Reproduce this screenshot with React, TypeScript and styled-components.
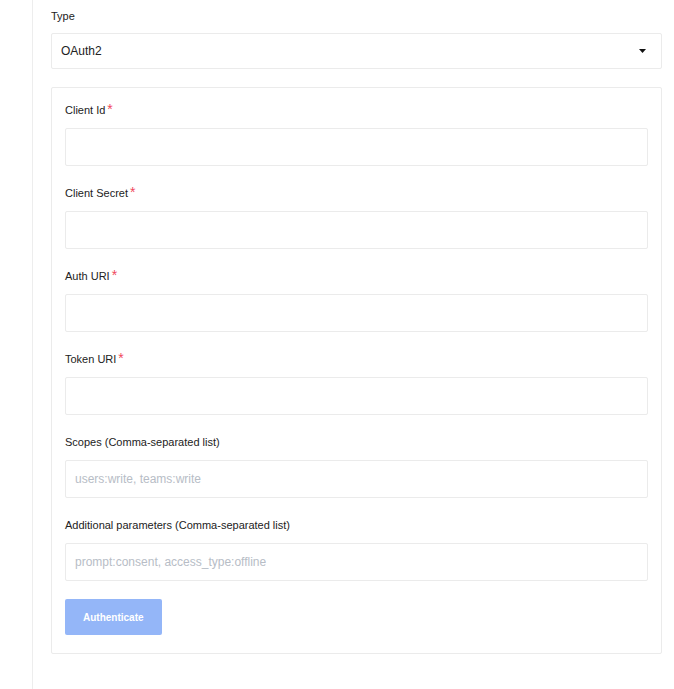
import React from "react";
import styled, { createGlobalStyle } from "styled-components";

const GlobalStyle = createGlobalStyle`
  *, *::before, *::after { box-sizing: border-box; }
  html, body { margin: 0; padding: 0; background: #ffffff; }
  body {
    font-family: "Liberation Sans", Arial, sans-serif;
    color: #222222;
  }
`;

const Page = styled.div`
  display: flex;
  min-height: 689px;
  background: #ffffff;
`;

const Sidebar = styled.aside`
  width: 33px;
  flex: 0 0 33px;
  border-right: 1px solid #ededed;
`;

const Main = styled.main`
  flex: 1;
  padding: 8px 12px 0 18px;
  display: flex;
  flex-direction: column;
`;

const TypeLabel = styled.label`
  display: block;
  font-size: 11px;
  line-height: 16px;
  color: #222222;
  margin-bottom: 9px;
`;

const SelectBox = styled.button`
  display: flex;
  align-items: center;
  justify-content: space-between;
  width: 100%;
  height: 36px;
  padding: 0 15px 0 9px;
  border: 1px solid #ebebeb;
  border-radius: 2px;
  background: #ffffff;
  font-family: "Liberation Sans", Arial, sans-serif;
  font-size: 12px;
  color: #222222;
  text-align: left;
  cursor: pointer;
`;

const Caret = styled.svg`
  width: 7px;
  height: 4px;
  display: block;
`;

const Card = styled.section`
  margin-top: 18px;
  border: 1px solid #ebebeb;
  border-radius: 2px;
  padding: 14px 13px 18px 13px;
  display: flex;
  flex-direction: column;
  gap: 18px;
`;

const FieldList = styled.div`
  display: flex;
  flex-direction: column;
  gap: 19px;
`;

const Field = styled.div`
  display: flex;
  flex-direction: column;
`;

const Label = styled.label`
  display: block;
  font-size: 11px;
  line-height: 16px;
  height: 16px;
  color: #222222;
  margin-bottom: 10px;
  white-space: nowrap;
`;

const Required = styled.span`
  color: #f0485d;
  font-size: 14px;
  line-height: 0;
  margin-left: 2px;
`;

const Input = styled.input`
  display: block;
  width: 100%;
  height: 38px;
  padding: 0 9px;
  border: 1px solid #ebebeb;
  border-radius: 2px;
  background: #ffffff;
  font-family: "Liberation Sans", Arial, sans-serif;
  font-size: 12px;
  color: #222222;
  outline: none;

  &::placeholder {
    color: #b7bdc6;
  }
`;

const Button = styled.button<{ $disabled?: boolean }>`
  align-self: flex-start;
  height: 36px;
  padding: 0 18px;
  border: none;
  border-radius: 2px;
  background: ${(p) => (p.$disabled ? "#94b6f8" : "#3b7af3")};
  color: #ffffff;
  font-family: "Liberation Sans", Arial, sans-serif;
  font-size: 10px;
  font-weight: 700;
  cursor: ${(p) => (p.$disabled ? "default" : "pointer")};
`;

type FieldDef = {
  label: string;
  required?: boolean;
  placeholder?: string;
};

const fields: FieldDef[] = [
  { label: "Client Id", required: true },
  { label: "Client Secret", required: true },
  { label: "Auth URI", required: true },
  { label: "Token URI", required: true },
  { label: "Scopes (Comma-separated list)", placeholder: "users:write, teams:write" },
  {
    label: "Additional parameters (Comma-separated list)",
    placeholder: "prompt:consent, access_type:offline",
  },
];

export default function App() {
  return (
    <>
      <GlobalStyle />
      <Page>
        <Sidebar />
        <Main>
          <TypeLabel>Type</TypeLabel>
          <SelectBox type="button">
            <span>OAuth2</span>
            <Caret viewBox="0 0 7 4" aria-hidden="true">
              <path d="M0 0 H7 L3.5 4 Z" fill="#111111" />
            </Caret>
          </SelectBox>
          <Card>
            <FieldList>
              {fields.map((f) => (
                <Field key={f.label}>
                  <Label>
                    {f.label}
                    {f.required && <Required>*</Required>}
                  </Label>
                  <Input placeholder={f.placeholder} />
                </Field>
              ))}
            </FieldList>
            <Button type="button" $disabled disabled>
              Authenticate
            </Button>
          </Card>
        </Main>
      </Page>
    </>
  );
}
